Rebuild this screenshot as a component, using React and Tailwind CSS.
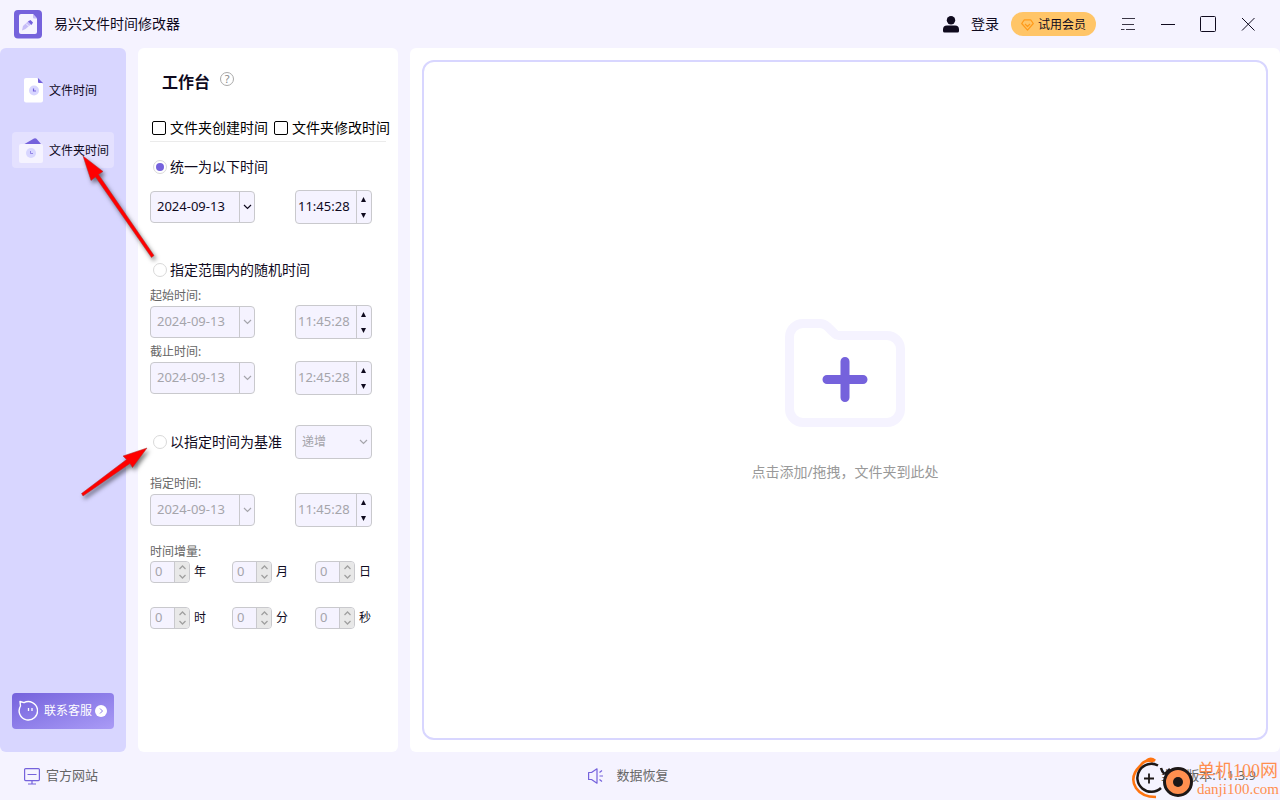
import { useState } from "react";

// ─── Icons ───────────────────────────────────────────────────────────────────

function LogoIcon() {
  return (
    <svg width="28" height="29" viewBox="0 0 28 29" fill="none">
      <rect width="28" height="28.5" rx="4" fill="#7562dc" />
      <path d="M5 6a2 2 0 012-2h12l4 4.500V22a2 2 0 01-2 2H7a2 2 0 01-2-2z" fill="#f5f3ff" />
      <path d="M19 4v3.500a1 1 0 001 1h3z" fill="#c6bdf8" />
      <path d="M8 20.500l1-4.500 6-5.500 3 3-6.500 5.500z" fill="#c6bdf8" />
      <path d="M14 11.500l2.500-1.500 2.500 2.500-1.500 2.500z" fill="#7562dc" />
      <path d="M12 13.500l3 3" stroke="#f5f3ff" />
    </svg>
  );
}

function FileIcon() {
  return (
    <svg width="26" height="26" viewBox="0 0 26 26" fill="none">
      <path d="M6 2a2 2 0 012-2h11l6 6v16.500a2 2 0 01-2 2H8a2 2 0 01-2-2z" fill="#fff" />
      <path d="M19.500 0H25v6z" fill="#d8d6ff" />
      <path d="M20 0l5 5h-4a1 1 0 01-1-1z" fill="#7562dc" />
      <circle cx="16" cy="12.500" r="5" fill="#d8d6ff" />
      <path d="M15.500 10.500v2.500H18" stroke="#7562dc" strokeWidth="1.200" />
    </svg>
  );
}

function FolderIcon() {
  return (
    <svg width="26" height="26" viewBox="0 0 26 26" fill="none">
      <path d="M6.500 6l9.500-5.500q1.500-.7 2.500.3L23 6z" fill="#7562dc" />
      <rect x="1" y="6" width="24" height="19" rx="2" fill="#f5f3ff" />
      <circle cx="13" cy="15" r="5" fill="#d8d6ff" />
      <path d="M12.500 13v2.500H15" stroke="#7562dc" strokeWidth="1" opacity=".7" />
    </svg>
  );
}

function ServiceIcon() {
  return (
    <svg width="20" height="22" viewBox="0 0 20 22" fill="none" stroke="#fff" strokeWidth="1.400">
      <path d="M2.500 6L2 1.500l4 1.200A9.200 9.200 0 11 2.500 6z" strokeLinejoin="round" />
      <path d="M10.500 8v3M14 8v3" strokeWidth="1.300" />
    </svg>
  );
}

function ArrowBadge() {
  return (
    <svg width="12" height="12" viewBox="0 0 12 12" fill="none">
      <circle cx="6" cy="6" r="6" fill="#fff" />
      <path d="M5 3.500L7.500 6 5 8.500" stroke="#8b7ae6" />
    </svg>
  );
}

function UserIcon() {
  return (
    <svg width="16" height="17" viewBox="0 0 16 17" fill="#0f0a1e">
      <circle cx="8" cy="4.200" r="4.200" />
      <path d="M4 9.500h8a4 4 0 014 4V15a1.500 1.500 0 01-1.500 1.500h-13A1.500 1.500 0 010 15v-1.500a4 4 0 014-4z" />
    </svg>
  );
}

function DiamondIcon() {
  return (
    <svg width="13" height="12" viewBox="0 0 13 12" fill="none" stroke="#ff9a1a" strokeWidth="1.200" strokeLinejoin="round">
      <path d="M3.300.8h6.400L12.300 4.500 6.500 11.200.7 4.500z" />
      <path d="M4 5l2.500 2.500L9 5" />
    </svg>
  );
}

function Chevron() {
  return (
    <svg width="9" height="6" viewBox="0 0 9 6" fill="none" stroke="currentColor" strokeWidth="1.200">
      <path d="M1 1l3.500 3.500L8 1" />
    </svg>
  );
}

function MonitorIcon() {
  return (
    <svg width="16" height="17" viewBox="0 0 16 17" fill="none" stroke="#7562dc" strokeWidth="1.200">
      <rect x=".6" y=".6" width="14.800" height="12" rx="1" />
      <path d="M3.500 6.500h9M8 12.600V16M4 16h8" />
    </svg>
  );
}

function SpeakerIcon() {
  return (
    <svg width="17" height="16" viewBox="0 0 17 16" fill="none" stroke="#7562dc" strokeWidth="1.200">
      <path d="M1.600 4.500H4.500L10 .8v14.400l-5.500-3.700H1.600z" strokeLinejoin="round" />
      <path d="M12.500 8H16M12.500 4.500L15 2.500M12.500 11.500l2.500 2" />
    </svg>
  );
}

function AddFolderIcon() {
  return (
    <svg width="120" height="108" viewBox="0 0 120 108" fill="none">
      <path
        d="M4.500 18A13.500 13.500 0 0118 4.500h17q4 0 7 2.800l8 7.700q1.500 1.500 3.500 1.500H102A13.500 13.500 0 01115.500 30v60a13.500 13.500 0 01-13.500 13.500H18A13.500 13.500 0 014.500 90z"
        stroke="#f5f3ff"
        strokeWidth="9"
      />
      <path d="M60 42.500v36M42 60.500h36" stroke="#7562dc" strokeWidth="9" strokeLinecap="round" />
    </svg>
  );
}

// ─── Fields ──────────────────────────────────────────────────────────────────

const fieldText = "text-[#0f0a1e] disabled:text-[#a5a5ab]";

function DateField({ label, value, disabled }) {
  return (
    <div className="flex h-8 w-[105px] overflow-hidden rounded border border-[#c9c9cd] bg-[#f5f3ff]">
      <input
        aria-label={label}
        defaultValue={value}
        disabled={disabled}
        className={`w-full min-w-0 flex-1 pl-[6px] text-[13px] outline-none ${fieldText}`}
      />
      <button
        aria-label="选择日期"
        disabled={disabled}
        className={`flex w-[15px] items-center justify-center border-l border-[#c9c9cd] ${fieldText}`}
      >
        <Chevron />
      </button>
    </div>
  );
}

function TimeField({ label, value, disabled }) {
  return (
    <div className="flex h-[34px] w-[77px] overflow-hidden rounded border border-[#c9c9cd] bg-[#f5f3ff]">
      <input
        aria-label={label}
        defaultValue={value}
        disabled={disabled}
        className={`w-full min-w-0 flex-1 pl-[2px] text-[13px] outline-none ${fieldText}`}
      />
      <div className="flex w-[15px] flex-col border-l border-[#c9c9cd] pr-[2px] text-[#0f0a1e]">
        <button aria-label="增加" className="flex flex-1 items-center justify-center">
          <svg width="5" height="5" viewBox="0 0 5 5" fill="currentColor"><path d="M2.500 0L5 5H0z" /></svg>
        </button>
        <button aria-label="减少" className="flex flex-1 items-center justify-center">
          <svg width="5" height="5" viewBox="0 0 5 5" fill="currentColor"><path d="M2.500 5L5 0H0z" /></svg>
        </button>
      </div>
    </div>
  );
}

function DateTimeRow({ label, time, disabled }) {
  return (
    <div className="flex items-center gap-10">
      <DateField label={`${label}日期`} value="2024-09-13" disabled={disabled} />
      <TimeField label={`${label}时刻`} value={time} disabled={disabled} />
    </div>
  );
}

function StepField({ unit }) {
  return (
    <label className="flex items-center gap-1 text-xs text-[#0f0a1e]">
      <span className="flex h-[22px] w-10 overflow-hidden rounded border border-[#c9c9cd] bg-[#f5f3ff]">
        <input defaultValue="0" disabled className="w-full min-w-0 flex-1 pl-1 text-[13px] text-[#a5a5ab]" />
        <span className="flex w-[15px] flex-col items-center justify-center gap-1 border-l border-[#c9c9cd] bg-[#e8e8e8] text-[#a0a0a0]">
          <svg width="7" height="5" viewBox="0 0 7 5" fill="none" stroke="currentColor" strokeWidth="1.300"><path d="M.5 4l3-3 3 3" /></svg>
          <svg width="7" height="5" viewBox="0 0 7 5" fill="none" stroke="currentColor" strokeWidth="1.300"><path d="M.5 1l3 3 3-3" /></svg>
        </span>
      </span>
      {unit}
    </label>
  );
}

function CheckOption({ children }) {
  return (
    <label className="flex items-center gap-1">
      <input
        type="checkbox"
        className="h-[14px] w-[14px] shrink-0 appearance-none rounded-xs border border-black bg-white checked:bg-[#7562dc]"
      />
      {children}
    </label>
  );
}

function RadioOption({ value, mode, onChange, children }) {
  return (
    <label className="flex h-5 items-center gap-[3px] pl-[3px] text-sm text-[#0f0a1e]">
      <input
        type="radio"
        name="mode"
        checked={mode === value}
        onChange={() => onChange(value)}
        className="h-[14px] w-[14px] shrink-0 appearance-none rounded-full border border-[#d9d9d9] bg-white bg-clip-content p-[2px] checked:bg-[#7562dc]"
      />
      {children}
    </label>
  );
}

function FieldLabel({ children }) {
  return <p className="h-[19px] text-xs leading-[19px] text-[#666]">{children}</p>;
}

// ─── Layout ──────────────────────────────────────────────────────────────────

function Header() {
  const btn = "flex h-12 w-10 items-center justify-center";
  return (
    <header className="flex h-12 items-center pr-3 pl-[14px] text-sm text-[#0f0a1e]">
      <LogoIcon />
      <h1 className="ml-3">易兴文件时间修改器</h1>
      <button className="ml-auto flex items-center gap-3">
        <UserIcon />
        登录
      </button>
      <button className="mr-3 ml-3 flex h-6 w-[85px] items-center justify-center gap-1 rounded-full bg-[#ffc568] pt-[2px] text-xs">
        <DiamondIcon />
        试用会员
      </button>
      <button aria-label="菜单" className={btn}>
        <svg width="14" height="14" viewBox="0 0 14 14" fill="none" stroke="#3a3646">
          <path d="M1 1.500h13M1 7.500h1.500M4 7.500h9M0 12.500h3.500M5 12.500h9M1 7.500h12" />
        </svg>
      </button>
      <button aria-label="最小化" className={btn}>
        <svg width="14" height="2" viewBox="0 0 14 2"><path d="M0 1h14v1H0z" fill="#0f0a1e" /></svg>
      </button>
      <button aria-label="最大化" className={btn}>
        <svg width="16" height="16" viewBox="0 0 16 16" fill="none" stroke="#0f0a1e">
          <rect x=".5" y=".5" width="15" height="15" rx="1" />
        </svg>
      </button>
      <button aria-label="关闭" className={btn}>
        <svg width="14" height="14" viewBox="0 0 14 14" fill="none" stroke="#0f0a1e">
          <path d="M1 1l12.500 12.500M13.500 1L1 13.500" />
        </svg>
      </button>
    </header>
  );
}

function Sidebar() {
  const item = "flex h-9 items-center gap-[5px] rounded pt-[2px] pl-[6px] text-xs whitespace-nowrap text-[#0f0a1e]";
  return (
    <aside className="flex w-[126px] shrink-0 flex-col rounded-md bg-[#d8d6ff] px-3 pt-6 pb-[23px]">
      <nav className="flex flex-col gap-6">
        <a href="#file" className={item}>
          <FileIcon />
          文件时间
        </a>
        <a href="#folder" className={`${item} bg-[#e4e1ff]`}>
          <FolderIcon />
          文件夹时间
        </a>
      </nav>
      <button className="mt-auto flex h-9 items-center rounded bg-linear-to-br from-[#7562dc] to-[#aa9bf6] pl-[6px] text-xs whitespace-nowrap text-white">
        <ServiceIcon />
        <span className="mr-[3px] ml-[6px]">联系客服</span>
        <ArrowBadge />
      </button>
    </aside>
  );
}

function Workbench() {
  const [mode, setMode] = useState("same");
  return (
    <section className="w-[260px] shrink-0 rounded-md bg-white px-3 pt-5 pb-6">
      <div className="flex h-7 items-center gap-[10px] pl-3">
        <h2 className="text-base font-bold text-[#0f0a1e]">工作台</h2>
        <button
          aria-label="帮助"
          className="mb-[6px] flex h-[14px] w-[14px] items-center justify-center rounded-full border border-[#aaa] text-[11px] text-[#888]"
        >
          ?
        </button>
      </div>

      <div className="mt-[22px] flex h-6 gap-[6px] border-b border-[#ebebeb] pb-[3px] pl-[2px] text-sm whitespace-nowrap text-black">
        <CheckOption>文件夹创建时间</CheckOption>
        <CheckOption>文件夹修改时间</CheckOption>
      </div>

      <div className="mt-[15px] flex flex-col gap-[13px]">
        <RadioOption value="same" mode={mode} onChange={setMode}>统一为以下时间</RadioOption>
        <DateTimeRow label="统一" time="11:45:28" />
      </div>

      <div className="mt-9">
        <RadioOption value="random" mode={mode} onChange={setMode}>指定范围内的随机时间</RadioOption>
        <div className="mt-[6px] flex flex-col gap-[3px]">
          <div>
            <FieldLabel>起始时间:</FieldLabel>
            <DateTimeRow label="起始" time="11:45:28" disabled />
          </div>
          <div>
            <FieldLabel>截止时间:</FieldLabel>
            <DateTimeRow label="截止" time="12:45:28" disabled />
          </div>
        </div>
      </div>

      <div className="mt-[30px] flex flex-col gap-[15px]">
        <div className="flex items-center">
          <div className="w-[145px] whitespace-nowrap">
            <RadioOption value="base" mode={mode} onChange={setMode}>以指定时间为基准</RadioOption>
          </div>
          <div className="relative h-[34px] w-[77px] text-[#a5a5ab]">
            <select
              aria-label="变化方式"
              disabled
              className="h-full w-full appearance-none rounded border border-[#c9c9cd] bg-[#f5f3ff] pl-[6px] text-xs opacity-100"
            >
              <option>递增</option>
              <option>递减</option>
            </select>
            <span className="pointer-events-none absolute top-[14px] right-1"><Chevron /></span>
          </div>
        </div>
        <div>
          <FieldLabel>指定时间:</FieldLabel>
          <DateTimeRow label="指定" time="11:45:28" disabled />
        </div>
        <div>
          <FieldLabel>时间增量:</FieldLabel>
          <div className="grid grid-cols-[82px_83px_auto] gap-y-6">
            {["年", "月", "日", "时", "分", "秒"].map((unit) => (
              <StepField key={unit} unit={unit} />
            ))}
          </div>
        </div>
      </div>
    </section>
  );
}

function DropArea() {
  return (
    <section className="flex flex-1 rounded-md bg-white p-3">
      <button className="flex flex-1 flex-col items-center justify-center rounded-xl border-2 border-[#d8d6ff]">
        <AddFolderIcon />
        <span className="mt-[35px] text-sm leading-5 text-[#999]">点击添加/拖拽，文件夹到此处</span>
      </button>
    </section>
  );
}

function Footer() {
  return (
    <footer className="grid h-12 grid-cols-[1fr_auto_1fr] items-center px-6 text-[13px] text-[#666]">
      <a href="#site" className="flex items-center gap-[6px]">
        <MonitorIcon />
        官方网站
      </a>
      <a href="#recover" className="flex items-center gap-3 pr-6">
        <SpeakerIcon />
        数据恢复
      </a>
      <span className="justify-self-end">当前版本:1.1.3.9</span>
    </footer>
  );
}

// Red pointers laid over the panels
function Pointers() {
  return (
    <svg className="pointer-events-none absolute top-[150px] left-[70px] drop-shadow-[2px_3px_2px_rgba(0,0,0,0.5)]" width="100" height="360" viewBox="70 150 100 360" fill="#f00">
      <path d="M83 156L103 171.500 98.500 174.500 154 255.500 151.500 257.500 95.500 177 91 180.500z" stroke="#a33" strokeWidth=".5" />
      <path d="M147 448L132.500 467.500 130 463.500 83 496 81.500 493.500 126.500 459.500 123 456z" stroke="#a33" strokeWidth=".5" />
    </svg>
  );
}

function Watermark() {
  return (
    <div className="pointer-events-none absolute right-px bottom-0 flex h-[43px] items-center gap-[2px] text-[#ff8f4f]">
      <svg width="64" height="43" viewBox="0 0 64 43" fill="none">
        <path d="M22 5Q15 1 9 9Q-2 20 5 31Q11 40 25 40" stroke="#ff7410" strokeWidth="2.500" />
        <path d="M16 3.500Q20 .5 24 4" stroke="#ff7410" strokeWidth="3" />
        <path d="M27 8.500A14 14 0 1030 31" stroke="#1d1717" strokeWidth="2.500" />
        <path d="M13 21.500h10M18 16.500v10" stroke="#1d1717" strokeWidth="1.800" />
        <path d="M30 11q1 4 3.500 6M39 12l-5 5" stroke="#1d1717" strokeWidth="2.500" />
        <circle cx="47" cy="25" r="13.500" fill="#ff8f4f" stroke="#1d1717" strokeWidth="3" />
        <circle cx="47" cy="25" r="5" fill="#1d1717" />
      </svg>
      <div className="font-['Liberation_Serif','Noto_Sans_CJK_SC',serif]">
        <p className="text-lg leading-5">单机100网</p>
        <p className="text-[15px] leading-4">danji100.com</p>
      </div>
    </div>
  );
}

export default function App() {
  return (
    <div className="relative flex min-h-screen flex-col bg-[#f5f3ff] font-['Noto_Sans','Noto_Sans_CJK_SC',sans-serif]">
      <Header />
      <main className="flex flex-1 gap-3">
        <Sidebar />
        <Workbench />
        <DropArea />
      </main>
      <Footer />
      <Pointers />
      <Watermark />
    </div>
  );
}
